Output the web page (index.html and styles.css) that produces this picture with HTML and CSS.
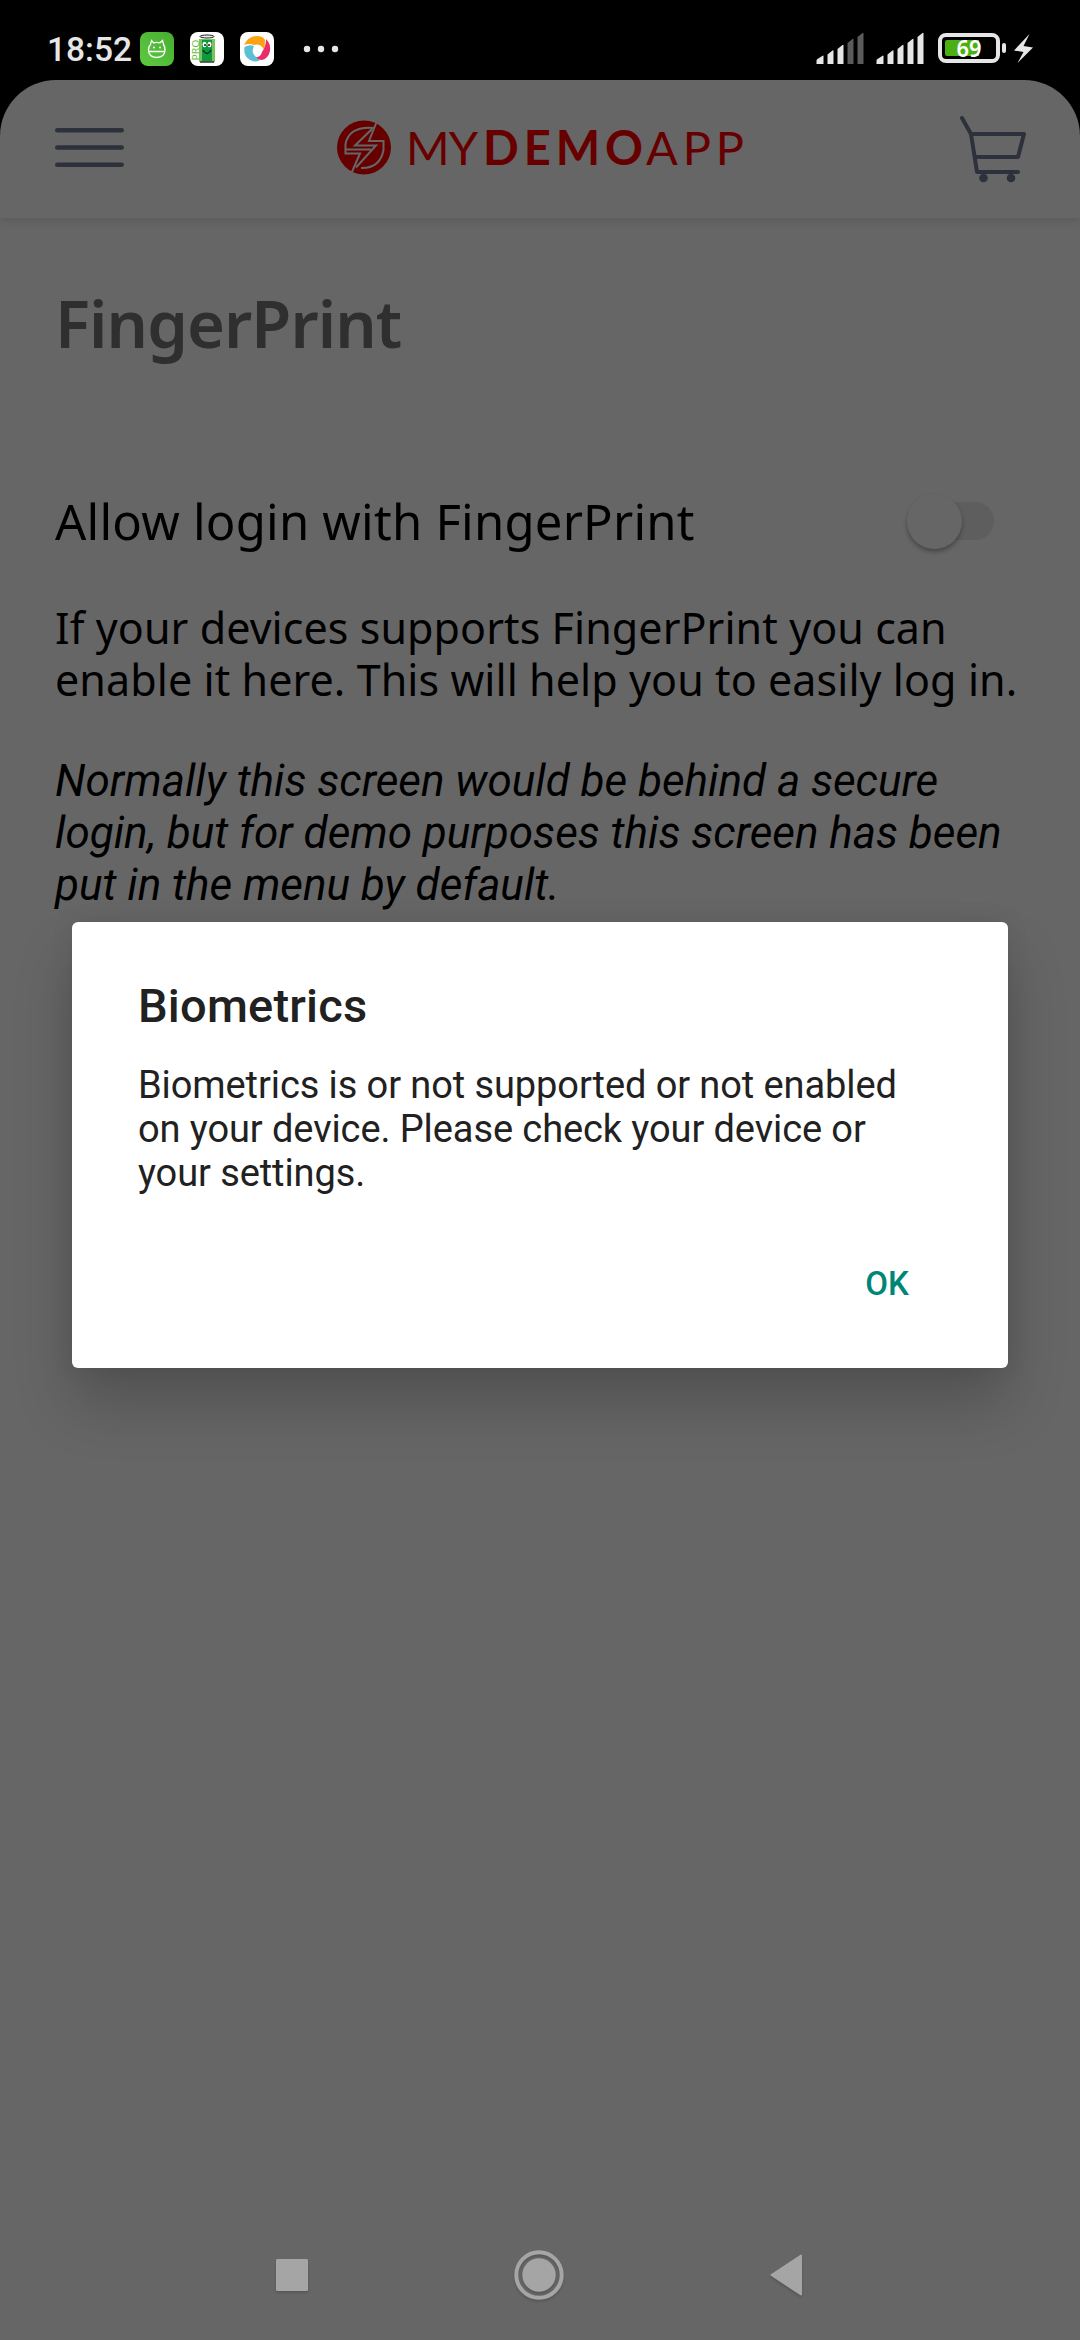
FILE: index.html
```html
<!DOCTYPE html>
<html lang="en">
<head>
<meta charset="utf-8">
<title>My Demo App</title>
<link rel="stylesheet" href="styles.css">
</head>
<body>
<div class="phone">
  <div class="status">
    <span class="clock">18:52</span>
    <svg class="tray" width="134" height="34" viewBox="140 32 134 34">
      <defs><linearGradient id="g" x1="0" y1="1" x2="1" y2="0"><stop offset="0" stop-color="#5ecb43"/><stop offset="1" stop-color="#46ad2e"/></linearGradient></defs>
      <rect x="140" y="32" width="34" height="34" rx="8" fill="url(#g)"/>
      <path d="M151.500 40.500l2 2.300q3-1 6.500 0l2.500-2.300 1 4q1.500 2 1.500 5.500 0 7-8.500 7.500-8-.5-8-7.500 0-3.500 2-5.500zM149 51.500h16" fill="none" stroke="#fff" stroke-width="1.300"/>
      <circle cx="154" cy="47.500" r="1" fill="#fff"/><circle cx="160" cy="47.500" r="1" fill="#fff"/>
      <rect x="190" y="32" width="34" height="34" rx="8" fill="#fff"/>
      <rect x="199" y="39" width="16" height="23" fill="#7cc35a"/><rect x="202" y="40" width="10" height="21" fill="#0b9a3c"/>
      <ellipse cx="207" cy="36.500" rx="7" ry="1.500" fill="#eee" stroke="#222" stroke-width="1"/>
      <path d="M200 62h14" stroke="#333" stroke-width="1.500"/>
      <ellipse cx="204.500" cy="44.500" rx="2" ry="2.700" fill="#fff"/><ellipse cx="209.500" cy="44.500" rx="2" ry="2.700" fill="#fff"/>
      <circle cx="205" cy="45" r="1" fill="#111"/><circle cx="209" cy="45" r="1" fill="#111"/>
      <path d="M203 50q4 7 8 0" fill="none" stroke="#123" stroke-width="1.300"/>
      <text class="pro" transform="translate(199 60.500) rotate(-90)" textLength="21" lengthAdjust="spacingAndGlyphs">PRO</text>
      <rect x="240" y="32" width="34" height="34" rx="8" fill="#fff"/>
      <path d="M244 45Q248 36 257 36Q263 36 265 40L264.500 50Q260 43 254 45Q249 43 244 45z" fill="#fca311"/>
      <path d="M266 39Q271 44 270 51Q268 59 262 60Q258 60 255 57.500Q261 57 262 52Q266 47 266 39z" fill="#e92d68"/>
      <path d="M244.500 47Q249 44 254 46Q252 49 253 53Q256 58.500 260 60Q256 63 250 60Q243 56 244.500 47z" fill="#5bbfd6"/>
    </svg>
    <svg class="dots" width="36" height="8" viewBox="0 0 36 8"><g fill="#e6e6e6"><circle cx="4" cy="4" r="3.200"/><circle cx="18" cy="4" r="3.200"/><circle cx="32" cy="4" r="3.200"/></g></svg>
    <svg class="signals" width="218" height="34" viewBox="816 33 218 34">
      <defs><path id="bars" d="M0 65v-3.500q0-1 1-1.500l5.500-3.500q.5 0 .5.500V65zM11 65V55.500l5-4q1-.5 1 .5V65zM21 65V50l5-4q1-.5 1 .5V65z"/><path id="tall" d="M31 65V44l5-4q1-.5 1 .5V65zM41 65V38l5-4q1-.5 1 .5V65z"/></defs>
      <use href="#bars" x="816.500" fill="#e6e6e6"/><use href="#tall" x="816.500" fill="#5b5b5b"/>
      <use href="#bars" x="876.500" fill="#e6e6e6"/><use href="#tall" x="876.500" fill="#e6e6e6"/>
      <rect x="940" y="36" width="58" height="26" rx="6" fill="none" stroke="#e6e6e6" stroke-width="4"/>
      <path d="M947 41h32v16h-32q-2 0-2-2v-12q0-2 2-2z" fill="#4cb012"/>
      <rect x="1002" y="44" width="4" height="10" rx="2" fill="#e6e6e6"/>
      <text x="969" y="58" class="level" textLength="25" lengthAdjust="spacingAndGlyphs">69</text>
      <path d="M1029.500 35L1014 51.500l9.500 1.500-6 11L1033 48.500l-9.500-1.500z" fill="#e6e6e6"/>
    </svg>
  </div>
  <div class="screen">
    <header class="header">
      <svg width="70" height="40" viewBox="0 0 70 40"><path d="M3.300 3.300h64.400M3.300 20.500h64.400M3.300 37.700h64.400" stroke="#2c313b" stroke-width="4.600" stroke-linecap="round"/></svg>
      <svg class="logo" width="410" height="56" viewBox="336 120 410 56">
        <circle cx="364" cy="147.500" r="27" fill="#660000"/>
        <g fill="none" stroke="#666" stroke-width="2">
          <path d="M374 128Q349 126 345.500 144V153.500H360L351.500 173"/>
          <path d="M361 168Q380 168.500 383.500 150V141H369L377 121"/>
          <path d="M372 129L355 145.500H376L356 167.500M345 149.500H371"/>
        </g>
        <g class="brand"><text x="406" y="165" class="thin" textLength="72">MY</text><text x="483" y="165" class="bold" textLength="160">DEMO</text><text x="646" y="165" class="thin" textLength="98">APP</text></g>
      </svg>
      <svg class="cart" width="68" height="68" viewBox="959 115 68 68"><g fill="none" stroke="#2c313b" stroke-width="4" stroke-linecap="round" stroke-linejoin="round"><path d="M962 118l9 16 6 38h41M971 134h53l-6 23h-42"/></g><circle cx="983.500" cy="178" r="4.300" fill="#2c313b"/><circle cx="1011" cy="178" r="4.300" fill="#2c313b"/></svg>
    </header>
    <main class="content">
      <h1 class="title">FingerPrint</h1>
      <div class="row"><span class="label">Allow login with FingerPrint</span><span class="switch"><span class="thumb"></span></span></div>
      <p class="info">If your devices supports FingerPrint you can<br>enable it here. This will help you to easily log in.</p>
      <p class="note">Normally this screen would be behind a secure<br>login, but for demo purposes this screen has been<br>put in the menu by default.</p>
    </main>
    <nav class="nav">
      <svg width="50" height="50" viewBox="0 0 50 50"><rect x="9" y="9" width="32" height="32" rx="1.500" fill="#a5a5a5"/></svg>
      <svg width="50" height="50" viewBox="0 0 50 50"><circle cx="25" cy="25" r="22.700" fill="none" stroke="#a5a5a5" stroke-width="4"/><circle cx="25" cy="25" r="16.700" fill="#a5a5a5"/></svg>
      <svg width="50" height="50" viewBox="0 0 50 50"><path d="M10.500 25L40 5.500v39z" fill="#a5a5a5" stroke="#a5a5a5" stroke-width="2" stroke-linejoin="round"/></svg>
    </nav>
  </div>
  <section class="dialog">
    <h2 class="dialog-title">Biometrics</h2>
    <p class="dialog-text">Biometrics is or not supported or not enabled<br>on your device. Please check your device or<br>your settings.</p>
    <button class="ok">OK</button>
  </section>
</div>
</body>
</html>
```
FILE: styles.css
```css
* { box-sizing: border-box; }
body { margin: 0; background: #000; }
.phone { position: relative; width: 1080px; height: 2340px; display: flex; flex-direction: column; overflow: hidden; background: #000; font-family: Roboto, sans-serif; }
.status { height: 80px; display: flex; align-items: center; padding: 18px 46px 0 47px; flex: none; }
.clock { width: 93px; font-size: 33.500px; font-weight: 500; line-height: 40px; padding-top: 1px; color: #e6e6e6; white-space: nowrap; }
.tray { flex: none; }
.dots { margin-left: 29px; }
.signals { margin-left: auto; }
.pro { font: 8px "Noto Sans", sans-serif; fill: #6abf3a; }
.level { font: 600 23px "Noto Sans", sans-serif; fill: #fff; text-anchor: middle; }
.screen { flex: 1; display: flex; flex-direction: column; background: #666; border-radius: 56px 56px 0 0; }
.header { height: 138px; flex: none; display: flex; align-items: flex-start; justify-content: space-between; padding: 35px 53px 0 54px; box-shadow: 0 3px 8px rgba(0, 0, 0, .12); border-radius: 56px 56px 0 0; }
.header > :first-child { margin-top: 12px; }
.logo { margin: 5px 0 0 -1px; }
.brand { fill: #660000; font-size: 47px; }
.thin { font-family: Lato, sans-serif; font-weight: 400; }
.bold { font-family: Lato, sans-serif; font-weight: 700; }
.content { flex: 1; padding: 60px 55px 0; font-family: "Noto Sans", sans-serif; color: #000; }
.title { margin: 0; font-size: 65px; line-height: 90px; font-weight: 600; letter-spacing: -.9px; color: #2f2f2f; white-space: nowrap; }
.row { display: flex; justify-content: space-between; align-items: center; height: 80px; margin-top: 113px; padding-right: 31px; }
.label { font-size: 49px; line-height: 80px; letter-spacing: .23px; white-space: nowrap; }
.switch { width: 80px; height: 38px; border-radius: 19px; background: #5e5e5e; display: flex; align-items: center; }
.thumb { width: 55px; height: 55px; flex: none; margin-left: -7px; border-radius: 50%; background: #666; box-shadow: 0 3px 4px rgba(0, 0, 0, .3); }
.info { margin: 41px 0 0; font-size: 43px; line-height: 52px; letter-spacing: .08px; white-space: nowrap; }
.note { margin: 49px 0 0; font: italic 44px/52px Roboto, sans-serif; white-space: nowrap; }
.nav { height: 130px; flex: none; display: flex; justify-content: space-between; align-items: center; padding: 0 269px 0 267px; filter: drop-shadow(0 2px 1px rgba(0, 0, 0, .15)); }
.dialog { position: absolute; left: 72px; top: 922px; width: 936px; height: 446px; padding: 56px 66px; display: flex; flex-direction: column; background: #fff; border-radius: 6px; box-shadow: 0 36px 60px rgba(0, 0, 0, .2), 0 0 24px rgba(0, 0, 0, .08); color: #212121; }
.dialog-title { margin: 0; font-size: 47px; line-height: 56px; font-weight: 500; letter-spacing: .2px; }
.dialog-text { margin: 29px 0 0; font-size: 38px; line-height: 44px; letter-spacing: -.09px; white-space: nowrap; }
.ok { align-self: flex-end; width: 110px; margin: 67px 0 0; padding: 0; border: 0; background: none; font: 500 33px/44px Roboto, sans-serif; color: #008577; }
```
